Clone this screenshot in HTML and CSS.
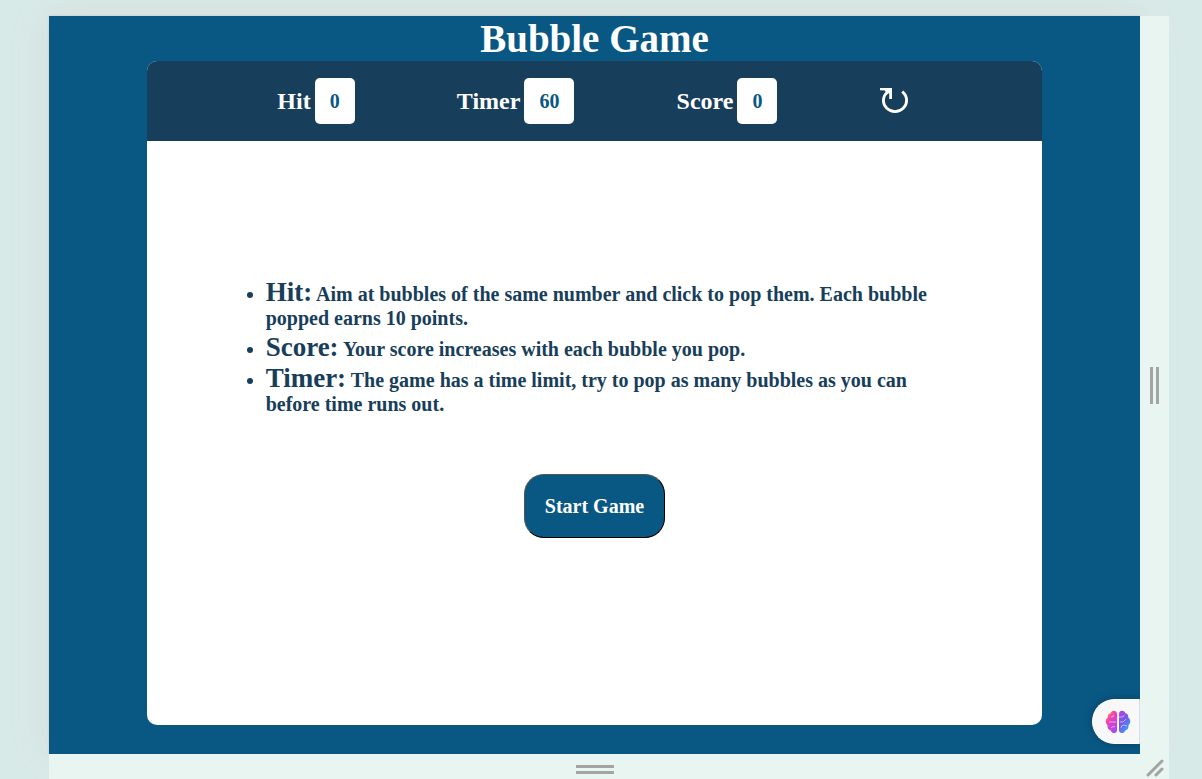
FILE: index.html
```html
<!DOCTYPE html>
<html lang="en">
<head>
<meta charset="utf-8">
<title>Bubble Game</title>
<link rel="stylesheet" href="styles.css">
</head>
<body>
<div class="frame">
  <div class="stage">
    <h1 class="title">Bubble Game</h1>
    <main class="panel">
      <header class="panel-top">
        <div class="stat"><h2 class="stat-name">Hit</h2><output class="stat-value">0</output></div>
        <div class="stat"><h2 class="stat-name">Timer</h2><output class="stat-value">60</output></div>
        <div class="stat"><h2 class="stat-name">Score</h2><output class="stat-value">0</output></div>
        <button class="restart" type="button" aria-label="Restart">
          <svg width="28" height="26" viewBox="0 0 28 26" fill="none" stroke="#fff" stroke-width="2.8" aria-hidden="true">
            <path d="M22.200 3.600C25 5.800 26.600 9 26.600 12.500A11.600 11.100 0 0 1 3.400 12.500C3.400 8.500 5.500 5 10 2"/>
            <path d="M0 0H12V11H9.200V5L6.500 6.500L5 2.600L0 2.200Z" fill="#fff" stroke="none"/>
          </svg>
        </button>
      </header>
      <section class="panel-body">
        <ul class="rules">
          <li><span class="term">Hit:</span> Aim at bubbles of the same number and click to pop them. Each bubble popped earns 10 points.</li>
          <li><span class="term">Score:</span> Your score increases with each bubble you pop.</li>
          <li><span class="term">Timer:</span> The game has a time limit, try to pop as many bubbles as you can before time runs out.</li>
        </ul>
        <button class="start" type="button">Start Game</button>
      </section>
    </main>
    <button class="assistant" type="button" aria-label="Assistant">
      <svg width="26" height="24" viewBox="0 0 26 24" aria-hidden="true">
        <defs>
          <linearGradient id="left" x1="0" y1="0" x2="0.6" y2="1"><stop offset="0" stop-color="#ff9a2e"/><stop offset=".1" stop-color="#ff8a3e"/><stop offset=".45" stop-color="#f23cb8"/><stop offset="1" stop-color="#a94af0"/></linearGradient>
          <linearGradient id="right" x1="0" y1="0" x2="0.7" y2="1"><stop offset="0" stop-color="#c03fe0"/><stop offset=".5" stop-color="#7358ee"/><stop offset="1" stop-color="#35a5ff"/></linearGradient>
        </defs>
        <path d="M12 4C12 1.500 10.500 .8 9 .8C7 .8 6 1.800 5.600 3.200C3.500 3.500 2.300 5.500 2.800 7.500C1 8.800 .6 10.500 .8 12C1 13.800 2 14.800 2.600 15.200C2 17.800 3.400 20 5.700 20.400C6.300 22 7.600 23 9.200 23C11 23 12 21.800 12 20Z" fill="url(#left)"/>
        <path d="M14 4C14 1.500 15.500 .8 17 .8C19 .8 20 1.800 20.400 3.200C22.500 3.500 23.700 5.500 23.200 7.500C25 8.800 25.400 10.500 25.200 12C25 13.800 24 14.800 23.400 15.200C24 17.800 22.600 20 20.300 20.400C19.700 22 18.400 23 16.800 23C15 23 14 21.800 14 20Z" fill="url(#right)"/>
        <path d="M4 12H11M6 7Q8.500 8 8.500 5M6 18Q8 15.500 10 17M14 7H17Q19 7 19 5M15 12H18L21 9M16 18Q16 15 19 15L22 16" fill="none" stroke="#fff" stroke-width=".9" stroke-opacity=".6"/>
      </svg>
    </button>
  </div>
  <div class="rail rail-side"><span class="grip-tall"></span></div>
  <div class="rail rail-bottom"><span class="grip-wide"></span></div>
  <div class="rail rail-corner">
    <svg width="20" height="20" viewBox="0 0 20 20" stroke="#a4a4a4" stroke-width="3" stroke-linecap="round" aria-hidden="true"><path d="M3 17L17 3M11 17L17 11"/></svg>
  </div>
</div>
</body>
</html>
```
FILE: styles.css
```css
* {
  box-sizing: border-box;
  margin: 0;
}

body {
  min-height: 100vh;
  display: flex;
  padding: 16px 33px 0 49px;
  background: #d8eae8;
  font-family: "Liberation Serif", "Times New Roman", serif;
  font-weight: bold;
}

.frame {
  flex: 1;
  display: grid;
  grid-template-columns: 1fr 29px;
  grid-template-rows: 1fr 25px;
}

.stage {
  position: relative;
  display: flex;
  flex-direction: column;
  align-items: center;
  background: #095884;
  box-shadow: 0 0 40px rgba(202, 128, 112, 0.12), 0 0 2px rgba(120, 90, 90, 0.25);
}

.title {
  color: #fff;
  font-size: 39px;
  line-height: 45px;
}

.panel {
  display: flex;
  flex-direction: column;
  flex: 1;
  width: 82%;
  margin-bottom: 29px;
  overflow: hidden;
  border-radius: 10px;
  background: #fff;
}

.panel-top {
  display: flex;
  align-items: center;
  justify-content: space-evenly;
  height: 80px;
  padding: 0 32px 0 28px;
  background: #173e5a;
}

.stat {
  display: flex;
  align-items: center;
  gap: 4px;
}

.stat-name {
  color: #fff;
  font-size: 24px;
  line-height: 28px;
}

.stat-value {
  padding: 11px 15px;
  border-radius: 5px;
  background: #fff;
  color: #095884;
  font-size: 20px;
  line-height: 24px;
}

.restart {
  display: flex;
  padding: 0;
  border: 0;
  background: none;
}

.panel-body {
  display: flex;
  flex: 1;
  flex-direction: column;
  align-items: center;
  justify-content: center;
  gap: 58px;
  padding-bottom: 48px;
  color: #173e5a;
}

.rules {
  display: grid;
  gap: 5px;
  width: 80%;
  padding: 0 20px 0 29px;
  font-size: 20px;
  line-height: 24px;
}

.term {
  font-size: 27px;
  line-height: 24px;
}

.start {
  padding: 19px 20px;
  border: 1px outset #000;
  border-radius: 20px;
  background: #095884;
  color: #fff;
  font: bold 20px/24px "Liberation Serif", "Times New Roman", serif;
}

.assistant {
  position: absolute;
  right: 0;
  bottom: 10px;
  display: flex;
  align-items: center;
  width: 48px;
  height: 45px;
  padding: 0 0 0 12px;
  border: 1px solid #fff;
  border-right-color: #d8dce4;
  border-radius: 23px 0 0 23px;
  background: #f8f8f9;
  box-shadow: 0 0 8px rgba(0, 0, 0, 0.3);
}

.rail {
  position: relative;
  display: flex;
  align-items: center;
  justify-content: center;
  background: #e9f5f1;
}

.rail-bottom {
  padding-top: 6px;
}

.rail-corner {
  padding-top: 2px;
}

.grip-tall {
  width: 9px;
  height: 37px;
  border: solid #a4a4a4;
  border-width: 0 3px;
}

.grip-wide {
  width: 38px;
  height: 9px;
  border: solid #a4a4a4;
  border-width: 3px 0;
}
```
